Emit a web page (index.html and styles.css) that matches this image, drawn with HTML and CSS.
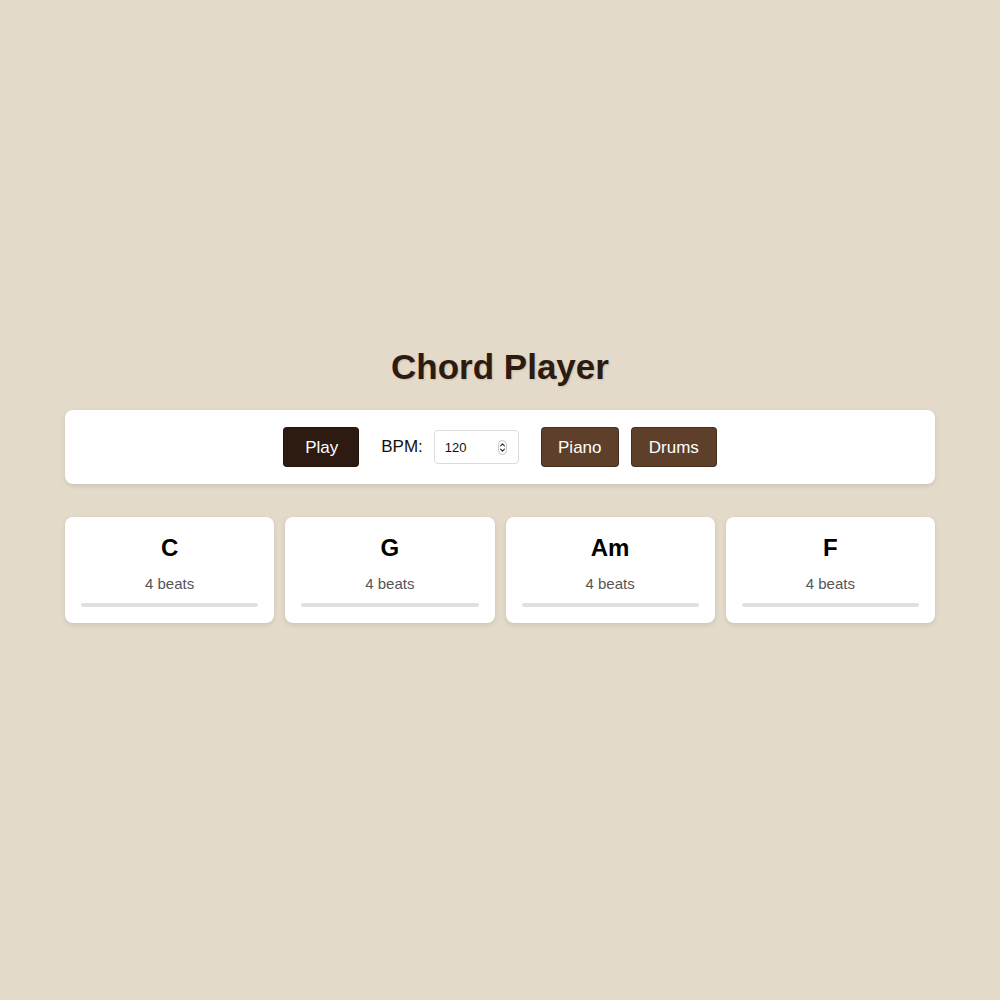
FILE: index.html
```html
<!DOCTYPE html>
<html lang="en">
<head>
<meta charset="utf-8">
<title>Chord Player</title>
<link rel="stylesheet" href="styles.css">
</head>
<body>
<main class="app">
  <h1 class="title">Chord Player</h1>
  <section class="controls">
    <button class="btn btn-play">Play</button>
    <label class="bpm">
      <span class="bpm-label">BPM:</span>
      <span class="num-box">
        <input class="num-input" type="number" value="120" min="40" max="240">
        <svg class="spin" width="9" height="15" viewBox="0 0 9 15" aria-hidden="true">
          <rect x="0.5" y="0.5" width="8" height="14" rx="4" fill="none" stroke="#c4c4c4" stroke-width="1"/>
          <path d="M2.6 5.8 L4.5 3.9 L6.4 5.8" fill="none" stroke="#222" stroke-width="1.1" stroke-linecap="round" stroke-linejoin="round"/>
          <path d="M2.6 9.2 L4.5 11.1 L6.4 9.2" fill="none" stroke="#222" stroke-width="1.1" stroke-linecap="round" stroke-linejoin="round"/>
        </svg>
      </span>
    </label>
    <div class="instruments">
      <button class="btn btn-inst">Piano</button>
      <button class="btn btn-inst">Drums</button>
    </div>
  </section>
  <section class="chords">
    <div class="card"><h2 class="chord">C</h2><p class="beats">4 beats</p><div class="bar"></div></div>
    <div class="card"><h2 class="chord">G</h2><p class="beats">4 beats</p><div class="bar"></div></div>
    <div class="card"><h2 class="chord">Am</h2><p class="beats">4 beats</p><div class="bar"></div></div>
    <div class="card"><h2 class="chord">F</h2><p class="beats">4 beats</p><div class="bar"></div></div>
  </section>
</main>
</body>
</html>
```
FILE: styles.css
```css
* { box-sizing: border-box; }
html, body { margin: 0; padding: 0; }
body {
  background: #e3dac9;
  font-family: "Liberation Sans", Arial, sans-serif;
  min-height: 100vh;
  display: flex;
  justify-content: center;
  padding-top: 346px;
}
.app {
  width: 870px;
}
.title {
  margin: 0 0 23px;
  text-align: center;
  font-size: 35px;
  line-height: 41px;
  font-weight: 700;
  color: #2d1b10;
  text-shadow: 1px 1px 2px rgba(0,0,0,0.12);
}
.controls {
  background: #fff;
  border-radius: 8px;
  box-shadow: 0 2px 5px rgba(0,0,0,0.1);
  height: 74px;
  display: flex;
  align-items: center;
  justify-content: center;
  gap: 22px;
}
.btn {
  height: 40px;
  border: 1px solid rgba(0,0,0,0.25);
  border-radius: 4px;
  color: #fff;
  font-family: "Liberation Sans", Arial, sans-serif;
  font-size: 17px;
  padding: 2px 21px 0;
  cursor: pointer;
}
.btn-play { background: #2d1b12; width: 76px; }
.btn-inst { background: #5e3f29; padding: 2px 16px 0; }
.btn-inst:first-child { width: 78px; }
.btn-inst:last-child { width: 86px; }
.bpm {
  display: flex;
  align-items: center;
  gap: 11px;
}
.bpm-label {
  font-size: 17px;
  color: #111;
}
.num-box {
  width: 85px;
  height: 34px;
  border: 1px solid #dcdcdc;
  border-radius: 4px;
  background: #fff;
  display: flex;
  align-items: center;
  padding: 0 11px 0 10px;
}
.num-input {
  flex: 1;
  min-width: 0;
  border: none;
  outline: none;
  padding: 0;
  font-family: "Liberation Sans", Arial, sans-serif;
  font-size: 13px;
  color: #111;
  background: transparent;
  -moz-appearance: textfield;
}
.num-input::-webkit-outer-spin-button,
.num-input::-webkit-inner-spin-button { -webkit-appearance: none; margin: 0; }
.spin { flex: none; }
.instruments {
  display: flex;
  gap: 12px;
}
.chords {
  margin-top: 33px;
  display: grid;
  grid-template-columns: repeat(4, 1fr);
  gap: 11px;
}
.card {
  background: #fff;
  border-radius: 8px;
  box-shadow: 0 2px 5px rgba(0,0,0,0.1);
  padding: 16px;
  height: 106px;
  text-align: center;
}
.chord {
  margin: 0;
  font-size: 24px;
  line-height: 30px;
  font-weight: 700;
  color: #000;
}
.beats {
  margin: 12px 0 0;
  font-size: 15px;
  line-height: 17px;
  color: #555;
}
.bar {
  margin-top: 11px;
  height: 4px;
  border-radius: 2px;
  background: #e0e0e0;
}
```
